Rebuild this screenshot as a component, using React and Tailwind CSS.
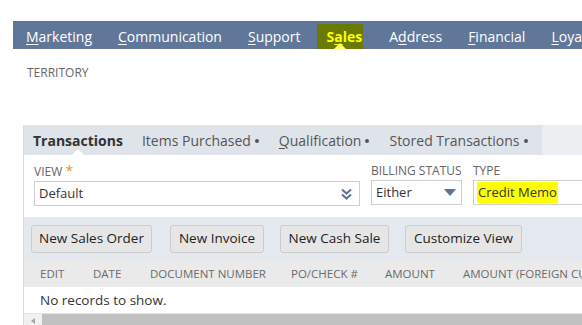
import React from "react";

const navItems = [
  { label: "Marketing", key: "M" },
  { label: "Communication", key: "C" },
  { label: "Support", key: "S" },
  { label: "Sales", key: "a", active: true },
  { label: "Address", key: "d" },
  { label: "Financial", key: "F" },
  { label: "Loyalty", key: "L" },
];

const tabs = ["Items Purchased", "Qualification", "Stored Transactions"];

const columns = [
  { label: "Edit", w: "w-[53px]" },
  { label: "Date", w: "w-[57px]" },
  { label: "Document Number", w: "w-[141px]" },
  { label: "PO/Check #", w: "w-[94px]" },
  { label: "Amount", w: "w-[78px]" },
  { label: "Amount (Foreign Currency)", w: "" },
];

// underline the access key letter
const Accel = ({ text, k }) => {
  const i = text.indexOf(k);
  if (i < 0) return text;
  return (
    <>
      {text.slice(0, i)}
      <span className="underline underline-offset-2">{text[i]}</span>
      {text.slice(i + 1)}
    </>
  );
};

const App = () => {
  return (
    <div
      className="w-[582px] h-[325px] overflow-hidden bg-white pt-[21px]"
      style={{ fontFamily: '"Open Sans", "Liberation Sans", sans-serif' }}
    >
      {/* top subtab nav */}
      <div className="ml-[13px] h-[28px] bg-[#607799] flex items-stretch pl-[13px] gap-[26px] whitespace-nowrap text-[14px] text-white">
        {navItems.map((item) =>
          item.active ? (
            <div
              key={item.label}
              className="relative -ml-[9px] mt-[3px] pl-[9px] pr-px bg-[#6a7a05] flex items-center font-bold text-[#ffff00]"
            >
              <Accel text={item.label} k={item.key} />
              <span className="absolute left-[17px] bottom-0 w-0 h-0 border-l-[6px] border-r-[6px] border-b-[6px] border-l-transparent border-r-transparent border-b-[#ffff66]" />
            </div>
          ) : (
            <div key={item.label} className="flex items-center pt-[2px]">
              <Accel text={item.label} k={item.key} />
            </div>
          )
        )}
      </div>

      <div className="h-[76px] pt-[16px] pl-[27px] text-[12px] leading-[16px] text-[#666]">
        TERRITORY
      </div>

      {/* transactions panel */}
      <div className="ml-[23px] border-l border-[#dcdcdc]">
        <div className="h-[30px] flex bg-[#eceef2] text-[14px] text-[#555] whitespace-nowrap">
          <div className="flex bg-[#dfe4eb] pr-[4px]">
            <div className="relative px-[9px] flex items-center font-bold text-[#333]">
              Transactions
              <span className="absolute left-[48px] bottom-0 w-0 h-0 border-l-[6px] border-r-[6px] border-b-[6px] border-l-transparent border-r-transparent border-b-white" />
            </div>
            {tabs.map((t) => (
              <div key={t} className="px-[10px] flex items-center">
                {t === "Qualification" ? <Accel text={t} k="Q" /> : t}
                <span className="ml-[4px] mt-[2px] w-[4px] h-[4px] rounded-full bg-[#555]" />
              </div>
            ))}
          </div>
        </div>

        {/* filters */}
        <div className="h-[62px] bg-white flex pl-[10px] gap-[11px] pt-[8px] whitespace-nowrap">
          <div className="w-[326px] shrink-0">
            <div className="text-[12px] leading-[16px] text-[#666]">
              VIEW <span className="text-[#e39b2b] text-[14px]">*</span>
            </div>
            <div className="mt-px h-[25px] border border-[#cfcfcf] flex items-center justify-between pl-[4px] pr-[7px] text-[13px] text-[#333]">
              Default
              <svg width="11" height="12" viewBox="0 0 11 12">
                <path d="M1 1.5 L5.5 5.5 L10 1.5" fill="none" stroke="#5f7498" strokeWidth="2.2" />
                <path d="M1 6.5 L5.5 10.5 L10 6.5" fill="none" stroke="#5f7498" strokeWidth="2.2" />
              </svg>
            </div>
          </div>
          <div className="w-[91px] shrink-0">
            <div className="text-[12px] leading-[16px] text-[#666]">BILLING STATUS</div>
            <div className="mt-px h-[25px] border border-[#cfcfcf] flex items-center justify-between pl-[4px] pr-[5px] text-[13px] text-[#333]">
              Either
              <svg width="12" height="7" viewBox="0 0 12 7">
                <path d="M0 0 L12 0 L6 7 Z" fill="#5f7498" />
              </svg>
            </div>
          </div>
          <div className="w-[140px] shrink-0">
            <div className="text-[12px] leading-[16px] text-[#666]">TYPE</div>
            <div className="mt-px h-[25px] border border-[#cfcfcf] flex items-stretch pl-[3px] py-px text-[13px] text-[#333]">
              <span className="bg-[#ffff00] px-px flex items-center">Credit Memo</span>
            </div>
          </div>
        </div>

        {/* buttons */}
        <div className="h-[43px] bg-[#e4e9f0] flex items-center pl-[7px] text-[13.5px] text-[#222] whitespace-nowrap">
          <button className="w-[121px] h-[28px] bg-[#e6e6e6] border border-[#cccccc] rounded-[3px] font-medium">
            New Sales Order
          </button>
          <button className="ml-[18px] w-[94px] h-[28px] bg-[#e6e6e6] border border-[#cccccc] rounded-[3px] font-medium">
            New Invoice
          </button>
          <button className="ml-[16px] w-[109px] h-[28px] bg-[#e6e6e6] border border-[#cccccc] rounded-[3px] font-medium">
            New Cash Sale
          </button>
          <button className="ml-[16px] w-[117px] h-[28px] bg-[#e6e6e6] border border-[#cccccc] rounded-[3px] font-medium">
            Customize View
          </button>
        </div>

        {/* list header */}
        <div className="h-[27px] bg-[#eaeaea] flex items-center pl-[16px] text-[11.5px] uppercase text-[#6b6b6b] whitespace-nowrap">
          {columns.map((c) => (
            <div key={c.label} className={`${c.w} shrink-0`}>
              {c.label}
            </div>
          ))}
        </div>
        <div className="h-[26px] bg-white flex items-center pl-[16px] text-[13.5px] text-[#333]">
          No records to show.
        </div>

        {/* horizontal scrollbar */}
        <div className="h-[14px] bg-[#f1f1f1] border-t border-[#e2e2e2] flex items-center">
          <div className="w-[18px] flex justify-center">
            <svg width="4" height="6" viewBox="0 0 4 6">
              <path d="M4 0 L0 3 L4 6 Z" fill="#a3a3a3" />
            </svg>
          </div>
          <div className="flex-1 h-full bg-[#c1c1c1]" />
        </div>
      </div>
    </div>
  );
};

export default App;
